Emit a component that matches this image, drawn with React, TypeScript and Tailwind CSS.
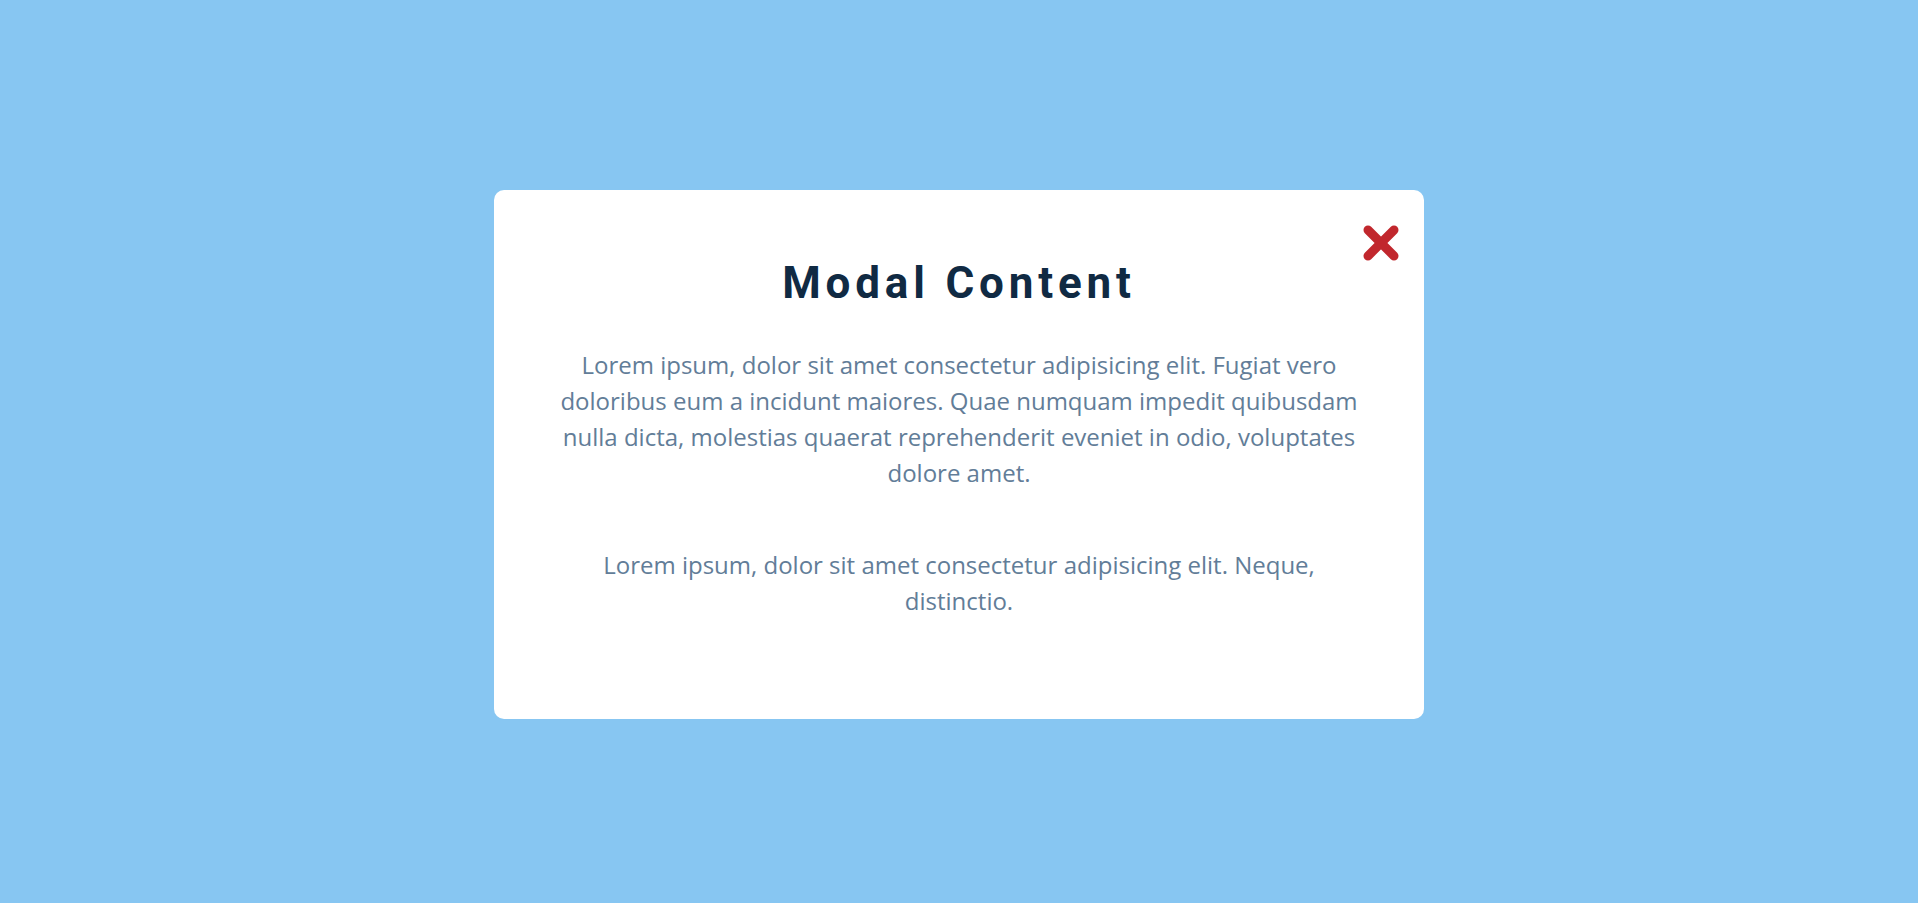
export default function App() {
  return (
    <div className="w-full min-h-screen bg-[#87c6f2] flex items-center justify-center pt-[6px]">
      <div className="relative w-[930px] bg-white rounded-[10px] px-16 pt-[67px] pb-[100px] text-center">
        <button
          type="button"
          aria-label="Close"
          className="absolute top-[35px] right-[25px] w-[36px] h-[36px] flex items-center justify-center"
        >
          <svg width="36" height="36" viewBox="0 0 36 36">
            <path d="M5 5 L31 31 M31 5 L5 31" stroke="#c1272d" strokeWidth="9" strokeLinecap="round" fill="none" />
          </svg>
        </button>

        <h1 className="font-['Roboto',sans-serif] font-bold text-[44px] leading-[1.2] tracking-[0.11em] text-[#102a43]">
          Modal Content
        </h1>

        <p className="mt-[37px] font-['Open_Sans',sans-serif] text-[24px] leading-[36px] text-[#627d98]">
          Lorem ipsum, dolor sit amet consectetur adipisicing elit. Fugiat vero doloribus eum a incidunt maiores. Quae
          numquam impedit quibusdam nulla dicta, molestias quaerat reprehenderit eveniet in odio, voluptates dolore amet.
        </p>

        <p className="mt-[56px] px-[40px] font-['Open_Sans',sans-serif] text-[24px] leading-[36px] text-[#627d98]">
          Lorem ipsum, dolor sit amet consectetur adipisicing elit. Neque, distinctio.
        </p>
      </div>
    </div>
  );
}
